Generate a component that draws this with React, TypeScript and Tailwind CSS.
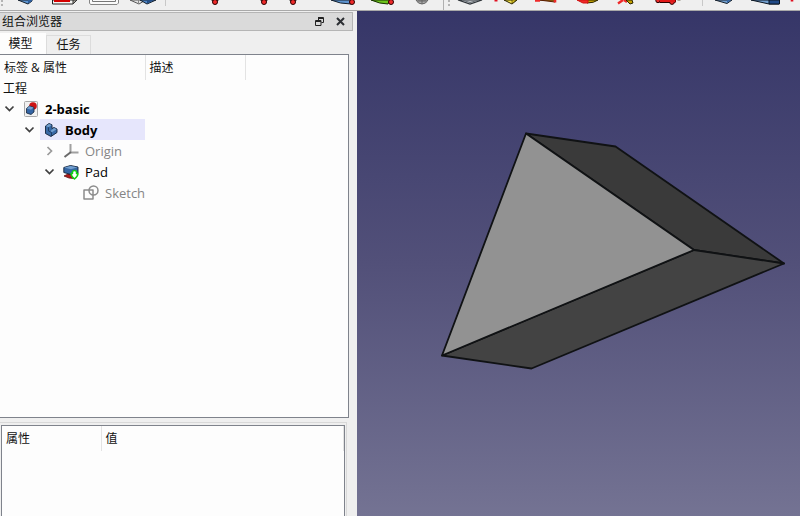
import { useState } from "react";
import type { ReactNode } from "react";

type ToolItem = {
    label: string;
    width: string;
    box: number;
    art: ReactNode;
};

// Every tool drawing uses a viewBox as wide as its button and 10 high
const modelTools: ToolItem[] = [
    {
        label: "Create part", width: "w-[34px]", box: 34,
        art: <>
            <path d="M8 0 L18 4 L22 1 V0Z" fill="#5c93cf" stroke="#16202c" />
            <path d="M18 0 V3.5 L22 1 V0Z" fill="#2e5f9e" />
        </>,
    },
    {
        label: "New sketch", width: "w-[40px]", box: 40,
        art: <>
            <path d="M8.5 0 V4 H29 L33 0Z" fill="#f4f4f2" stroke="#222" />
            <path d="M29 4 V0 H33Z" fill="#a9a69c" stroke="#333" />
            <rect x="10" y="0" width="16" height="2" fill="#d40000" />
        </>,
    },
    {
        label: "Attach sketch", width: "w-[40px]", box: 40,
        art: <>
            <path d="M5.5 0 V3 L6.5 4.5 H33 L34.5 3 V0" fill="#fafafa" stroke="#858585" />
            <path d="M8.5 0 V1.5 H31.5 V0" fill="none" stroke="#777" />
        </>,
    },
    {
        label: "Validate sketch", width: "w-[41px]", box: 41,
        art: <>
            <path d="M6 0 L15 4 L20 1 V0Z" fill="#e4e4e4" stroke="#555" />
            <path d="M14.5 0 V4" stroke="#888" />
            <path d="M16 0 L23 4 L32 0Z" fill="#4e84c4" stroke="#16202c" />
            <path d="M23 0 V3.5 L30 0Z" fill="#244f87" />
        </>,
    },
];

const datumTools: ToolItem[] = [
    {
        label: "Datum point", width: "w-[66px]", box: 66,
        art: <PinTool x={49} />,
    },
    {
        label: "Datum line", width: "w-[46px]", box: 46,
        art: <PinTool x={32} />,
    },
    {
        label: "Datum plane", width: "w-[48px]", box: 48,
        art: <PinTool x={15} />,
    },
    {
        label: "Shape binder", width: "w-[40px]", box: 40,
        art: <>
            <path d="M5 0 Q14 4 25 4 L26 0Z" fill="#5c93cf" stroke="#16202c" />
            <circle cx="26" cy="2" r="2.5" fill="#ef2929" stroke="#280000" />
        </>,
    },
    {
        label: "Sub-shape binder", width: "w-[36px]", box: 36,
        art: <>
            <path d="M5 0 Q14 4 22 4 L24 0Z" fill="#6cc41c" stroke="#173000" />
            <circle cx="25" cy="2" r="2.5" fill="#ef2929" stroke="#280000" />
        </>,
    },
    {
        label: "Clone", width: "w-[40px]", box: 40,
        art: <>
            <path d="M14 0 Q16 4 20 4 T26 0Z" fill="#aaa" stroke="#666" />
            <path d="M20 0 V4 M16 1 H24" stroke="#666" />
        </>,
    },
];

const featureTools: ToolItem[] = [
    {
        label: "Pad", width: "w-[38px]", box: 38,
        art: <>
            <path d="M6 0 L18 4 L30 0Z" fill="#c8ccd0" stroke="#30353a" strokeWidth="1.2" />
            <path d="M10 0 L18 2.5 L27 0" fill="none" stroke="#666c72" />
        </>,
    },
    {
        label: "Revolution", width: "w-[40px]", box: 40,
        art: <>
            <path d="M6 0 V1.5" stroke="#e01020" strokeWidth="3" />
            <path d="M14 0 L22 4 L27 0Z" fill="#fce94f" stroke="#2b2500" />
            <path d="M22 0 V3.5 L26.5 0Z" fill="#e8cf20" stroke="#2b2500" strokeWidth="0.6" />
        </>,
    },
    {
        label: "Additive loft", width: "w-[40px]", box: 40,
        art: <>
            <path d="M9 0 L25 2 V0Z" fill="#a89018" stroke="#5b1b00" />
            <path d="M5 0.5 H10 M25 0 V2.5" stroke="#ef2929" strokeWidth="2.6" />
        </>,
    },
    {
        label: "Additive pipe", width: "w-[38px]", box: 38,
        art: <>
            <path d="M17 0 V3 Q24 3 28 0Z" fill="#c4a000" stroke="#2b2500" />
            <path d="M7 0 L13 3 H18 V0Z" fill="#ef2929" stroke="#d01010" />
        </>,
    },
    {
        label: "Additive helix", width: "w-[40px]", box: 40,
        art: <>
            <path d="M10 3.5 L15 0 M16 0 L19 2" stroke="#ef2929" strokeWidth="2.4" />
            <path d="M18 0 L22 4 L25 3 L24 0Z" fill="#c4a000" stroke="#2b2500" />
        </>,
    },
    {
        label: "Additive primitive", width: "w-[52px]", box: 52,
        art: <>
            <path d="M9 1 H28" stroke="#7a0000" strokeWidth="3" />
            <circle cx="10" cy="0.5" r="2.2" fill="#ef2929" stroke="#280000" />
            <circle cx="24" cy="2" r="2.4" fill="#ef2929" stroke="#280000" />
            <path d="M12 2.5 H22" stroke="#280000" />
            <path d="M12 1 H27" stroke="#e01818" strokeWidth="2" />
            <path d="M31 0 V1" stroke="#aaa79a" strokeWidth="3" />
        </>,
    },
];

const cutTools: ToolItem[] = [
    {
        label: "Pocket", width: "w-[38px]", box: 38,
        art: <>
            <path d="M8 0 L20 3.5 L25 0Z" fill="#729fcf" stroke="#16202c" />
            <path d="M20 0 V3 L24 0Z" fill="#3465a4" />
        </>,
    },
    {
        label: "Hole", width: "w-[42px]", box: 42,
        art: <>
            <path d="M6 0 L24 4 H34 V0Z" fill="#729fcf" stroke="#0b1521" />
            <path d="M24 0 H34.5 V4 H24Z" fill="#204a87" stroke="#0b1521" />
        </>,
    },
    {
        label: "Groove", width: "w-[20px]", box: 20,
        art: <>
            <path d="M5 0 V1.5" stroke="#e01020" strokeWidth="2.6" />
            <path d="M13 0 L20 3 V0Z" fill="#729fcf" stroke="#16202c" />
        </>,
    },
];

function PinTool({ x }: { x: number }) {
    return <>
        <path d={`M${x - 4} 0 L${x} 3 L${x + 4} 0Z`} fill="#222" />
        <circle cx={x} cy="2" r="2.5" fill="#ef2929" stroke="#280000" />
    </>;
}

function ToolGroup({ items }: { items: ToolItem[] }) {
    return <>
        {items.map(({ label, width, box, art }) => (
            <button key={label} type="button" aria-label={label} className={`h-[10px] shrink-0 overflow-hidden ${width}`}>
                <svg viewBox={`0 0 ${box} 10`} className="block h-[10px] w-full">{art}</svg>
            </button>
        ))}
    </>;
}

function Grip() {
    return <svg viewBox="0 0 5 10" className="block h-[10px] w-[5px] shrink-0">
        <path d="M1 1 H3 M1 5 H3" stroke="#b4b4b4" strokeWidth="2" />
    </svg>;
}

function DocumentIcon() {
    return <svg viewBox="0 0 16 16" className="block size-4">
        <rect x="1.5" y="0.5" width="13" height="15" rx="1" fill="#f1f1f1" stroke="#a9a9a9" />
        <circle cx="10" cy="5" r="3.8" fill="#cc1414" />
        <path d="M3.5 7.5 L6.5 5 L11 6.5 V11 L8 13.5 L3.5 12Z" fill="#3465a4" stroke="#14243a" strokeWidth="0.8" />
        <path d="M3.8 7.5 L6.5 5.3 L10.6 6.6 L8 8.8Z" fill="#729fcf" />
    </svg>;
}

function BodyIcon() {
    return <svg viewBox="0 0 16 16" className="block size-4">
        <path d="M2.5 4 L6 1.5 L9 2.8 V6.5 L11 5.5 L14 7 V10.5 L8 14.5 L2.5 11.5Z" fill="#3969a6" stroke="#13233a" strokeWidth="0.9" strokeLinejoin="round" />
        <path d="M3 4 L6 2 L8.7 3 L5.5 5.3Z M7.5 9 L11 6 L13.6 7.2 L9 10.3Z" fill="#729fcf" />
        <path d="M5.5 5.3 V9 L8.5 10.5 V14" fill="none" stroke="#1b3558" strokeWidth="0.8" />
    </svg>;
}

function OriginIcon() {
    return <svg viewBox="0 0 16 16" className="block size-4">
        <path d="M7.5 9.5 V1 M7.5 9.5 H15.5" fill="none" stroke="#a0a0a0" strokeWidth="2" />
        <path d="M8 9 L1.5 14" stroke="#6a6a6a" strokeWidth="2" />
    </svg>;
}

function PadIcon() {
    return <svg viewBox="0 0 16 16" className="block size-4">
        <path d="M1 12 L5 10 H11 V14.5 L6 14Z" fill="#b01818" stroke="#5f1010" strokeWidth="0.8" />
        <path d="M0.8 3.5 L7.5 1.5 L15 3 V9 L8 10.5 L0.8 8.5Z" fill="#3465a4" stroke="#14243a" strokeWidth="0.9" />
        <path d="M1.2 3.6 L7.5 1.9 L14.5 3.2 L8 5.2Z" fill="#729fcf" />
        <path d="M9.5 7.5 Q11.5 5.5 13.5 7.5 V9.5 H15 Q15 12 11.5 15 Q8 12 8 9.5 H9.5Z" fill="#fff" stroke="#10d010" strokeWidth="1.5" strokeLinejoin="round" />
    </svg>;
}

function SketchIcon() {
    return <svg viewBox="0 0 16 16" className="block size-4" fill="none" stroke="#8c8c8c" strokeWidth="1.5">
        <path d="M1 5 H10 V14 H1Z" strokeLinejoin="round" />
        <circle cx="10.5" cy="5.5" r="4.5" />
    </svg>;
}

type TreeRow = {
    name: string;
    indent: string;
    icon: ReactNode;
    text: string;
    expander?: "open" | "closed";
    selected?: boolean;
};

const rows: TreeRow[] = [
    { name: "2-basic", indent: "", icon: <DocumentIcon />, text: "font-bold text-black", expander: "open" },
    { name: "Body", indent: "pl-5", icon: <BodyIcon />, text: "font-bold text-black", expander: "open", selected: true },
    { name: "Origin", indent: "pl-10", icon: <OriginIcon />, text: "text-[#858585]", expander: "closed" },
    { name: "Pad", indent: "pl-10", icon: <PadIcon />, text: "text-black", expander: "open" },
    { name: "Sketch", indent: "pl-15", icon: <SketchIcon />, text: "text-[#858585]" },
];

function Expander({ state, name }: { state?: "open" | "closed"; name: string }) {
    if (!state) return <span className="w-5 shrink-0" />;

    return <button type="button" aria-label={`Toggle ${name}`} className="flex w-5 shrink-0 justify-center">
        <svg viewBox="0 0 10 10" className="block size-[10px]" fill="none" strokeWidth="1.7">
            {state === "open"
                ? <path d="M0.5 2.5 L4.5 6.5 L8.5 2.5" stroke="#404040" />
                : <path d="M2.5 1 L6.5 5 L2.5 9" stroke="#9a9a9a" />}
        </svg>
    </button>;
}

function ModelTree() {
    return <table className="w-full table-fixed border-collapse text-left">
        <colgroup>
            <col className="w-[145px]" />
            <col className="w-[100px]" />
            <col />
        </colgroup>
        <thead>
            <tr className="h-[25px]">
                <th className="border-r border-[#e3e3e3] p-0 pl-1 font-normal">标签 &amp; 属性</th>
                <th className="border-r border-[#e3e3e3] p-0 pl-1 font-normal">描述</th>
                <th className="p-0" />
            </tr>
        </thead>
        <tbody>
            <tr className="h-[18px]">
                <td className="p-0 pl-[3px]">工程</td>
                <td className="p-0" />
                <td className="p-0" />
            </tr>
            {rows.map((row) => (
                <tr key={row.name} className="h-[21px] text-[13px]">
                    <td className="p-0">
                        <div className={`flex h-[21px] items-center ${row.indent}`}>
                            <Expander state={row.expander} name={row.name} />
                            <div className={`flex h-full grow items-center ${row.selected ? "bg-[#e6e6fc]" : ""}`}>
                                <span className="flex w-[22px] justify-center">{row.icon}</span>
                                <span className={`pl-[3px] ${row.text}`}>{row.name}</span>
                            </div>
                        </div>
                    </td>
                    <td className="p-0" />
                    <td className="p-0" />
                </tr>
            ))}
        </tbody>
    </table>;
}

function ComboView() {
    const [tab, setTab] = useState<"model" | "tasks">("model");

    const active = "h-[21px] w-[46px] bg-[#fdfdfd] pr-[5px]";
    const idle = "h-[19px] w-[45px] border border-b-0 border-[#dcdcdc] bg-[#efefef]";

    return <aside className="flex w-[357px] shrink-0 flex-col pt-px">
        {/* Dock title */}
        <div className="mr-1 flex h-[19px] shrink-0 items-center border border-l-0 border-[#b5b5b5] bg-[#dadada] pr-[7px] pl-[2px]">
            <h1 className="grow pt-px">组合浏览器</h1>
            <button type="button" aria-label="Float" className="mr-3">
                <svg viewBox="0 0 9 9" className="block size-[9px]" fill="none" stroke="#222">
                    <path d="M3 0.5 H8.5 V5.5 H6.5 M3.5 0 V3 M3 1.5 H8" />
                    <path d="M0.5 3.5 H6 V8.5 H0.5Z M0 4.5 H6" />
                </svg>
            </button>
            <button type="button" aria-label="Close">
                <svg viewBox="0 0 9 9" className="block size-[9px]" fill="none" stroke="#2c2f33" strokeWidth="2">
                    <path d="M1 1 L8 8 M8 1 L1 8" />
                </svg>
            </button>
        </div>

        {/* Tabs */}
        <div role="tablist" className="mr-[7px] flex h-[23px] shrink-0 items-end">
            <button type="button" role="tab" aria-selected={tab === "model"} onClick={() => setTab("model")} className={tab === "model" ? active : idle}>模型</button>
            <button type="button" role="tab" aria-selected={tab === "tasks"} onClick={() => setTab("tasks")} className={tab === "tasks" ? active : idle}>任务</button>
        </div>

        <div className="mr-[8px] min-h-0 flex-1 overflow-hidden border border-l-0 border-[#7f838c] bg-[#fdfdfd]">
            {tab === "model" && <ModelTree />}
        </div>

        {/* Property editor */}
        <div className="mt-1 mr-[10px] h-[94px] shrink-0 overflow-hidden border-t border-r border-[#d9d9d9] pt-[2px] pr-px pl-px">
            <div className="h-full border border-b-0 border-[#7f838c] bg-[#fdfdfd]">
                <table className="w-full table-fixed border-collapse text-left">
                    <thead>
                        <tr className="h-[25px]">
                            <th className="w-[99px] border-r border-[#e3e3e3] p-0 pl-1 font-normal">属性</th>
                            <th className="border-r border-[#e3e3e3] p-0 pl-1 font-normal">值</th>
                        </tr>
                    </thead>
                </table>
            </div>
        </div>
    </aside>;
}

function Viewport() {
    return <main className="min-w-0 flex-1 bg-linear-to-b from-[#363668] via-[#525079] via-50% to-[#747393]">
        <svg viewBox="0 0 443 505" className="block h-full w-full" stroke="#101214" strokeWidth="1.8" strokeLinejoin="round">
            <path d="M169 122.5 L258.5 135.5 L427 252.5 L337 239Z" fill="#3a3a3a" />
            <path d="M337 239 L427 252.5 L174.5 357.5 L85 344.5Z" fill="#434343" />
            <path d="M169 122.5 L337 239 L85 344.5Z" fill="#929292" />
        </svg>
    </main>;
}

export default function App() {
    return <div className="flex h-screen flex-col overflow-hidden bg-[#efefef] font-['Open_Sans','Noto_Sans_CJK_SC',sans-serif] text-[12px] leading-[16px] text-[#111]">
        <div className="flex h-[11px] shrink-0 overflow-hidden border-b border-[#a9a9a9]">
            <div className="flex w-[444px] shrink-0 border-r border-[#b0b0b0]">
                <Grip />
                <span className="w-[5px]" />
                <ToolGroup items={modelTools} />
                <span className="h-[6px] w-px bg-[#c8c8c8]" />
                <ToolGroup items={datumTools} />
            </div>
            <div className="flex grow pl-[3px]">
                <Grip />
                <ToolGroup items={featureTools} />
                <span className="mr-[4px] ml-[2px] h-[6px] w-px bg-[#c8c8c8]" />
                <ToolGroup items={cutTools} />
            </div>
        </div>

        <div className="flex min-h-0 flex-1">
            <ComboView />
            <Viewport />
        </div>
    </div>;
}
